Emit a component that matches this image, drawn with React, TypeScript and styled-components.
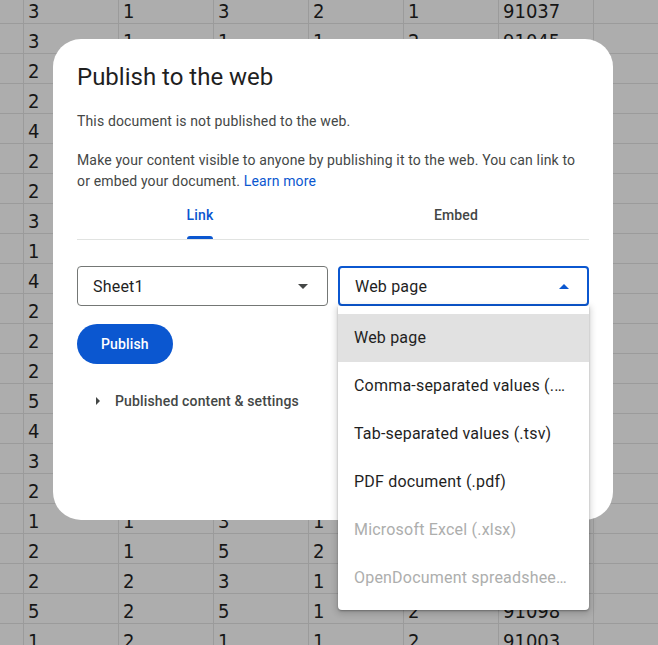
import React from 'react';
import styled, { createGlobalStyle } from 'styled-components';

const GlobalStyle = createGlobalStyle`
  html, body {
    margin: 0;
    padding: 0;
    background: #adadad;
    overflow: hidden;
  }
  * {
    box-sizing: border-box;
  }
`;

const rows: string[][] = [
  ['3', '1', '3', '2', '1', '91037'],
  ['3', '1', '1', '1', '2', '91045'],
  ['2', '2', '4', '1', '1', '91052'],
  ['2', '1', '2', '2', '1', '91016'],
  ['4', '3', '1', '1', '2', '91077'],
  ['2', '2', '5', '1', '1', '91041'],
  ['2', '1', '3', '2', '2', '91023'],
  ['3', '2', '2', '1', '1', '91064'],
  ['1', '1', '4', '1', '2', '91008'],
  ['4', '2', '1', '2', '1', '91039'],
  ['2', '1', '3', '1', '1', '91085'],
  ['2', '2', '2', '1', '2', '91012'],
  ['2', '1', '5', '2', '1', '91057'],
  ['5', '3', '1', '1', '1', '91070'],
  ['4', '2', '3', '1', '2', '91031'],
  ['3', '1', '2', '2', '1', '91049'],
  ['2', '2', '4', '1', '1', '91026'],
  ['1', '1', '3', '1', '2', '91061'],
  ['2', '1', '5', '2', '1', '91019'],
  ['2', '2', '3', '1', '1', '91044'],
  ['5', '2', '5', '1', '2', '91098'],
  ['1', '2', '1', '1', '2', '91003'],
];

const Sheet = styled.div`
  display: grid;
  grid-template-columns: 24px repeat(7, 95px);
  grid-auto-rows: 30px;
  margin-top: -6px;
  color: #161616;
  font-family: 'Liberation Sans Narrow', 'DejaVu Sans Condensed', 'Liberation Sans', sans-serif;
  font-size: 20px;
`;

const Cell = styled.div`
  border-right: 1px solid #9b9b9b;
  border-bottom: 1px solid #9b9b9b;
  padding: 4px 0 0 4px;
  line-height: 26px;
  white-space: nowrap;
  overflow: hidden;
`;

const Dialog = styled.div`
  position: absolute;
  left: 53px;
  top: 39px;
  width: 560px;
  height: 481px;
  background: #fff;
  border-radius: 28px;
  padding: 22px 24px 24px;
  font-family: Roboto, 'Liberation Sans', sans-serif;
  color: #1f1f1f;
`;

const Title = styled.h1`
  margin: 0;
  font-size: 24px;
  font-weight: 400;
  line-height: 32px;
  color: #1f1f1f;
`;

const Text = styled.p<{ $gap?: number }>`
  margin: ${({ $gap }) => $gap ?? 0}px 0 0;
  font-size: 14px;
  line-height: 21px;
  letter-spacing: 0.15px;
  color: #444746;
`;

const Link = styled.a`
  color: #0b57d0;
  text-decoration: none;
`;

const TabBar = styled.div`
  border-bottom: 1px solid #e1e3e1;
  margin-top: -1px;
`;

const TabList = styled.div`
  display: flex;
  margin: 0 5px 0 -5px;
`;

const Tab = styled.div`
  flex: 1;
  height: 48px;
  display: flex;
  justify-content: center;
`;

const TabLabel = styled.span<{ $active?: boolean }>`
  position: relative;
  height: 48px;
  line-height: 48px;
  font-size: 14px;
  font-weight: 500;
  letter-spacing: 0.15px;
  color: ${({ $active }) => ($active ? '#0b57d0' : '#444746')};

  &::after {
    content: '';
    display: ${({ $active }) => ($active ? 'block' : 'none')};
    position: absolute;
    left: 0;
    right: 0;
    bottom: 0;
    height: 3px;
    border-radius: 3px 3px 0 0;
    background: #0b57d0;
  }
`;

const SelectRow = styled.div`
  display: grid;
  grid-template-columns: 1fr 1fr;
  gap: 10px;
  margin-top: 26px;
`;

const SelectWrap = styled.div`
  position: relative;
`;

const SelectBox = styled.div<{ $open?: boolean }>`
  height: 40px;
  display: flex;
  align-items: center;
  justify-content: space-between;
  padding: 0 18px 0 15px;
  border: ${({ $open }) => ($open ? '2px solid #0b57d0' : '1px solid #747775')};
  border-radius: 4px;
  font-size: 16px;
  letter-spacing: 0.2px;
  color: #1f1f1f;
`;

const Caret = styled.span<{ $up?: boolean; $color: string }>`
  width: 0;
  height: 0;
  border-left: 5px solid transparent;
  border-right: 5px solid transparent;
  ${({ $up, $color }) =>
    $up ? `border-bottom: 5px solid ${$color};` : `border-top: 5px solid ${$color};`}
  margin-right: ${({ $up }) => ($up ? 0 : 1)}px;
`;

const Menu = styled.ul`
  position: absolute;
  left: 0;
  right: 0;
  top: 40px;
  margin: 0;
  padding: 8px 0;
  list-style: none;
  background: #fff;
  border-radius: 0 0 4px 4px;
  box-shadow: 0 2px 6px 2px rgba(0, 0, 0, 0.15), 0 1px 2px rgba(0, 0, 0, 0.3);
  z-index: 2;
`;

const MenuItem = styled.li<{ $selected?: boolean; $disabled?: boolean }>`
  height: 48px;
  line-height: 48px;
  padding: 0 20px 0 16px;
  font-size: 16px;
  letter-spacing: 0.2px;
  white-space: nowrap;
  overflow: hidden;
  text-overflow: ellipsis;
  background: ${({ $selected }) => ($selected ? '#e1e1e1' : 'transparent')};
  color: ${({ $disabled }) => ($disabled ? '#adaead' : '#1f1f1f')};
`;

const PublishButton = styled.button`
  display: block;
  margin-top: 18px;
  height: 40px;
  padding: 0 24px;
  border: none;
  border-radius: 20px;
  background: #0b57d0;
  color: #fff;
  font-family: Roboto, 'Liberation Sans', sans-serif;
  font-size: 14px;
  font-weight: 500;
  letter-spacing: 0.15px;
`;

const Disclosure = styled.div`
  display: flex;
  align-items: center;
  height: 48px;
  margin-top: 13px;
  padding-left: 19px;
  gap: 15px;
  font-size: 14px;
  font-weight: 500;
  letter-spacing: 0.15px;
  color: #444746;
`;

const Arrow = styled.span`
  width: 0;
  height: 0;
  border-top: 4px solid transparent;
  border-bottom: 4px solid transparent;
  border-left: 4px solid #444746;
`;

const formats = [
  { label: 'Web page', selected: true },
  { label: 'Comma-separated values (.csv)' },
  { label: 'Tab-separated values (.tsv)' },
  { label: 'PDF document (.pdf)' },
  { label: 'Microsoft Excel (.xlsx)', disabled: true },
  { label: 'OpenDocument spreadsheet (.ods)', disabled: true },
];

export default function App() {
  return (
    <>
      <GlobalStyle />
      <Sheet>
        {rows.map((row, r) => (
          <React.Fragment key={r}>
            <Cell />
            {row.map((v, c) => (
              <Cell key={c}>{v}</Cell>
            ))}
            <Cell />
          </React.Fragment>
        ))}
      </Sheet>
      <Dialog>
        <Title>Publish to the web</Title>
        <Text $gap={18}>This document is not published to the web.</Text>
        <Text $gap={18}>
          Make your content visible to anyone by publishing it to the web. You can link to or
          embed your document. <Link href="#">Learn more</Link>
        </Text>
        <TabBar>
          <TabList>
            <Tab>
              <TabLabel $active>Link</TabLabel>
            </Tab>
            <Tab>
              <TabLabel>Embed</TabLabel>
            </Tab>
          </TabList>
        </TabBar>
        <SelectRow>
          <SelectWrap>
            <SelectBox>
              Sheet1
              <Caret $color="#444746" />
            </SelectBox>
          </SelectWrap>
          <SelectWrap>
            <SelectBox $open>
              Web page
              <Caret $up $color="#0b57d0" />
            </SelectBox>
            <Menu>
              {formats.map((f) => (
                <MenuItem key={f.label} $selected={f.selected} $disabled={f.disabled}>
                  {f.label}
                </MenuItem>
              ))}
            </Menu>
          </SelectWrap>
        </SelectRow>
        <PublishButton>Publish</PublishButton>
        <Disclosure>
          <Arrow />
          Published content &amp; settings
        </Disclosure>
      </Dialog>
    </>
  );
}
